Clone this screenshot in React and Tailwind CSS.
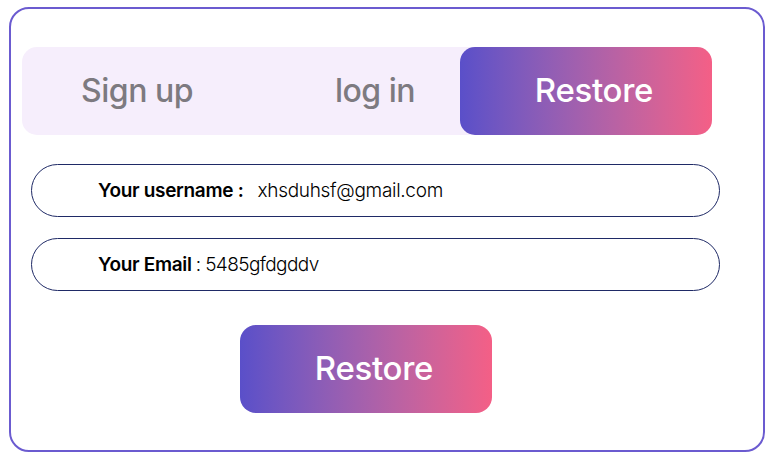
export default function App() {
  const font = { fontFamily: "Inter, 'Noto Sans', sans-serif" };
  return (
    <div className="w-[775px] h-[465px] bg-white pt-[7px] pl-[9px]" style={font}>
      <div className="w-[756px] h-[445px] border-2 border-[#6b5bd0] rounded-[20px] pt-[38px] pl-[11px]">
        <div className="flex w-[690px] h-[88px] bg-[#f6eefc] rounded-[15px]">
          <div className="w-[230px] flex items-center justify-center text-[32px] font-medium text-[#7d7a80] tracking-[-0.5px]">
            Sign up
          </div>
          <div className="w-[208px] flex items-center justify-center pl-[38px] text-[32px] font-medium text-[#7d7a80] tracking-[-0.5px]">
            log in
          </div>
          <div className="w-[252px] flex items-center justify-center pl-[16px] rounded-[15px] bg-gradient-to-r from-[#5a4fc9] to-[#f45f86] text-[33px] font-medium text-white tracking-[-0.3px]">
            Restore
          </div>
        </div>
        <div className="flex flex-col gap-[21px] mt-[29px] ml-[9px]">
          <div className="w-[689px] h-[53px] rounded-full border border-[#1f2a66] flex items-center pl-[66px] pt-[2px] text-[19px] text-black">
            <span className="font-semibold tracking-[-0.3px]">Your username :</span>
            <span className="ml-[14px] font-light tracking-[-0.3px]">xhsduhsf@gmail.com</span>
          </div>
          <div className="w-[689px] h-[53px] rounded-full border border-[#1f2a66] flex items-center pl-[66px] pt-[2px] text-[19px] text-black">
            <span className="font-semibold tracking-[-0.3px]">Your Email</span>
            <span className="ml-[4px] font-light tracking-[-0.6px]">: 5485gfdgddv</span>
          </div>
        </div>
        <div className="mt-[34px] ml-[218px] w-[252px] h-[88px] rounded-[16px] bg-gradient-to-r from-[#5a4fc9] to-[#f45f86] flex items-center justify-center pl-[16px] text-[33px] font-medium text-white tracking-[-0.3px]">
          Restore
        </div>
      </div>
    </div>
  );
}
